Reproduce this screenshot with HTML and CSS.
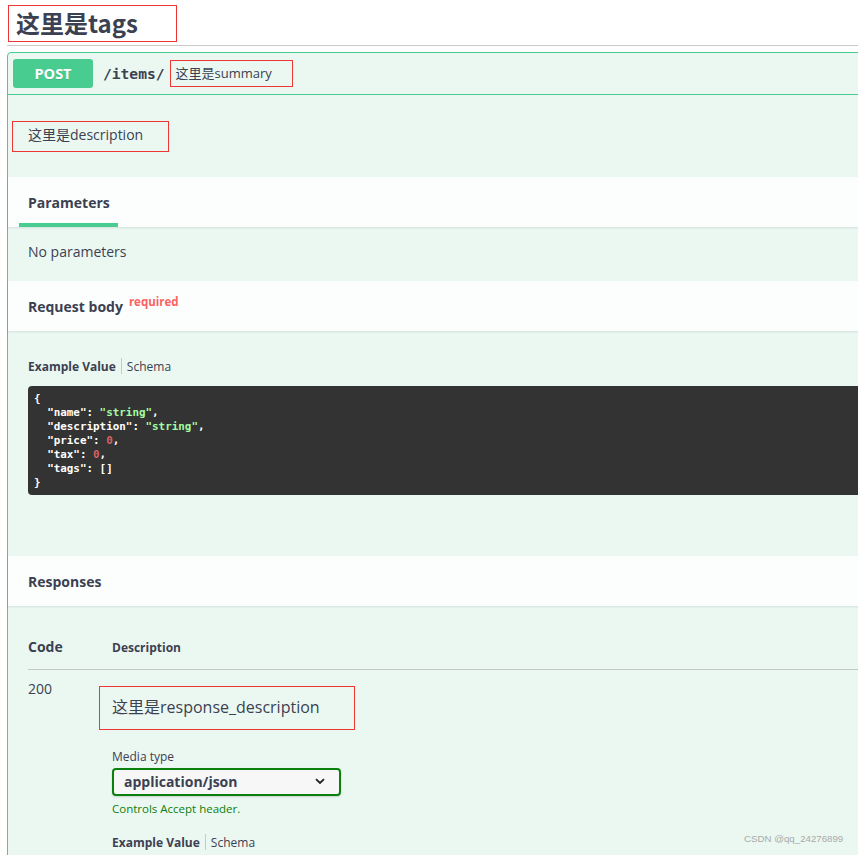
FILE: index.html
```html
<!DOCTYPE html>
<html lang="zh">
<head>
<meta charset="utf-8">
<title>Swagger</title>
<link rel="stylesheet" href="styles.css">
</head>
<body>
<div class="page">
  <div class="tag-header">
    <div class="tag-box mark">这里是tags</div>
  </div>

  <div class="opblock">
    <div class="summary">
      <span class="method">POST</span>
      <span class="path">/items/</span>
      <span class="summary-text mark">这里是summary</span>
    </div>

    <div class="desc-wrap">
      <div class="desc-box mark">这里是description</div>
    </div>

    <div class="section-header">
      <div class="tab-active">Parameters</div>
    </div>
    <div class="no-params">No parameters</div>

    <div class="section-header">
      <h4 class="sh-title">Request body</h4>
      <span class="required">required</span>
    </div>
    <div class="body-content">
      <div class="tabs-line">
        <span class="tab-strong">Example Value</span>
        <span class="tab-sep"></span>
        <span class="tab-light">Schema</span>
      </div>
      <pre class="code"><span class="p">{</span>
  <span class="k">"name"</span><span class="p">: </span><span class="s">"string"</span><span class="p">,</span>
  <span class="k">"description"</span><span class="p">: </span><span class="s">"string"</span><span class="p">,</span>
  <span class="k">"price"</span><span class="p">: </span><span class="n">0</span><span class="p">,</span>
  <span class="k">"tax"</span><span class="p">: </span><span class="n">0</span><span class="p">,</span>
  <span class="k">"tags"</span><span class="p">: []</span>
<span class="p">}</span></pre>
    </div>

    <div class="section-header">
      <h4 class="sh-title">Responses</h4>
    </div>
    <div class="responses">
      <div class="resp-head">
        <div class="col-code head-code">Code</div>
        <div class="head-desc">Description</div>
      </div>
      <div class="resp-row">
        <div class="col-code code-200">200</div>
        <div class="col-desc">
          <div class="resp-desc-box mark">这里是response_description</div>
          <div class="media-label">Media type</div>
          <div class="select">
            <span>application/json</span>
            <svg class="chev" width="10" height="7" viewBox="0 0 10 7"><path d="M1 1.2 L5 5 L9 1.2" fill="none" stroke="#222" stroke-width="1.8"/></svg>
          </div>
          <div class="accept-msg">Controls Accept header.</div>
          <div class="tabs-line tabs-line-2">
            <span class="tab-strong">Example Value</span>
            <span class="tab-sep"></span>
            <span class="tab-light">Schema</span>
          </div>
        </div>
      </div>
    </div>
  </div>
</div>
<div class="watermark">CSDN @qq_24276899</div>
</body>
</html>
```

FILE: styles.css
```css
html, body {
  margin: 0;
  padding: 0;
  overflow: hidden;
  background: #ffffff;
}
body {
  font-family: "Open Sans", "Noto Sans CJK SC", sans-serif;
  color: #3b4151;
}
.page {
  width: 1000px;
  padding-left: 7px;
}
.mark {
  border: 1px solid #f03535;
  box-sizing: border-box;
}
.tag-header {
  height: 46px;
  box-sizing: border-box;
  padding-top: 5px;
  border-bottom: 1px solid #c9c9c9;
}
.tag-box {
  margin-left: 1px;
  width: 169px;
  height: 37px;
  padding-left: 7px;
  font-size: 24px;
  font-weight: 700;
  line-height: 33px;
  font-family: "Noto Sans CJK SC", "Open Sans", sans-serif;
}
.opblock {
  margin-top: 6px;
  border: 1px solid #49cc90;
  border-radius: 4px;
  background: #ebf8f2;
}
.summary {
  display: flex;
  align-items: center;
  padding: 5px;
  height: 31px;
  border-bottom: 1px solid #49cc90;
}
.method {
  width: 80px;
  height: 29px;
  border-radius: 3px;
  background: #49cc90;
  color: #fff;
  font-weight: 700;
  font-size: 14.5px;
  line-height: 29px;
  text-align: center;
  text-shadow: 0 1px 0 rgba(0,0,0,.1);
}
.path {
  font-family: "DejaVu Sans Mono", monospace;
  font-weight: 700;
  font-size: 14.6px;
  padding-left: 10px;
  padding-right: 5px;
  color: #3b4151;
}
.summary-text {
  width: 123px;
  height: 27px;
  padding-left: 5px;
  font-size: 13px;
  line-height: 25px;
}
.desc-wrap {
  padding: 26px 0 25px 4px;
}
.desc-box {
  width: 157px;
  height: 31px;
  padding-left: 15px;
  font-size: 14px;
  line-height: 25px;
}
.section-header {
  display: flex;
  align-items: center;
  height: 50px;
  box-sizing: border-box;
  padding: 0 20px;
  background: rgba(255,255,255,.8);
  box-shadow: 0 1px 2px rgba(0,0,0,.1);
}
.tab-active {
  align-self: stretch;
  display: flex;
  align-items: center;
  box-sizing: border-box;
  padding: 4px 8px 0 9px;
  margin-left: -9px;
  border-bottom: 4px solid #49cc90;
  font-size: 14px;
  font-weight: 700;
}
.sh-title {
  margin: 0;
  font-size: 14px;
  font-weight: 700;
}
.required {
  color: #fc6262;
  font-size: 11.5px;
  font-weight: 700;
  padding-left: 6px;
  position: relative;
  top: -5px;
}
.no-params {
  padding: 15px 20px 19px;
  font-size: 14px;
  line-height: 20px;
}
.body-content {
  padding: 27px 0 61px 20px;
}
.tabs-line {
  display: flex;
  align-items: center;
  height: 16px;
  font-size: 12px;
}
.tab-strong {
  font-weight: 700;
}
.tab-sep {
  width: 1px;
  height: 16px;
  background: #c8c8c8;
  margin: 0 5px;
}
.tab-light {
  font-weight: 400;
}
.code {
  margin: 12px 0 0 0;
  background: #333333;
  border-radius: 4px;
  height: 109px;
  box-sizing: border-box;
  padding: 6px 6px 5px;
  font-family: "DejaVu Sans Mono", monospace;
  font-weight: 700;
  font-size: 10.9px;
  line-height: 14px;
  color: #ffffff;
}
.code .k { color: #ffffff; }
.code .p { color: #ffffff; }
.code .s { color: #a2fca2; }
.code .n { color: #d36363; }
.responses {
  padding: 0 0 60px 20px;
}
.resp-head {
  display: flex;
  align-items: flex-end;
  height: 64px;
  box-sizing: border-box;
  padding-bottom: 12px;
  border-bottom: 1px solid #c3cac6;
}
.col-code {
  width: 84px;
  flex-shrink: 0;
}
.head-code {
  font-size: 14px;
  font-weight: 700;
  line-height: 20px;
}
.head-desc {
  font-size: 12px;
  font-weight: 700;
  line-height: 18px;
}
.resp-row {
  display: flex;
  padding-top: 10px;
}
.code-200 {
  font-size: 14px;
  line-height: 18px;
}
.col-desc {
  display: flex;
  flex-direction: column;
  padding-top: 6px;
}
.resp-desc-box {
  margin-left: -13px;
  width: 256px;
  height: 44px;
  padding-left: 12px;
  font-size: 16px;
  line-height: 40px;
}
.media-label {
  margin-top: 19px;
  font-size: 12px;
  line-height: 16px;
}
.select {
  margin-top: 3px;
  width: 229px;
  height: 28px;
  box-sizing: border-box;
  border: 2px solid #0c800c;
  border-radius: 4px;
  background: #f7f7f7;
  display: flex;
  align-items: center;
  justify-content: space-between;
  padding: 0 14px 1px 10px;
  font-size: 14px;
  font-weight: 700;
  box-shadow: 0 1px 2px rgba(0,0,0,.15);
}
.accept-msg {
  margin-top: 5px;
  font-size: 11.5px;
  line-height: 16px;
  color: #0b800b;
}
.tabs-line-2 {
  margin-top: 17px;
}
.watermark {
  position: absolute;
  left: 744px;
  top: 833px;
  font-family: "Liberation Sans", sans-serif;
  font-size: 9.7px;
  color: #a8aaa9;
}
```
